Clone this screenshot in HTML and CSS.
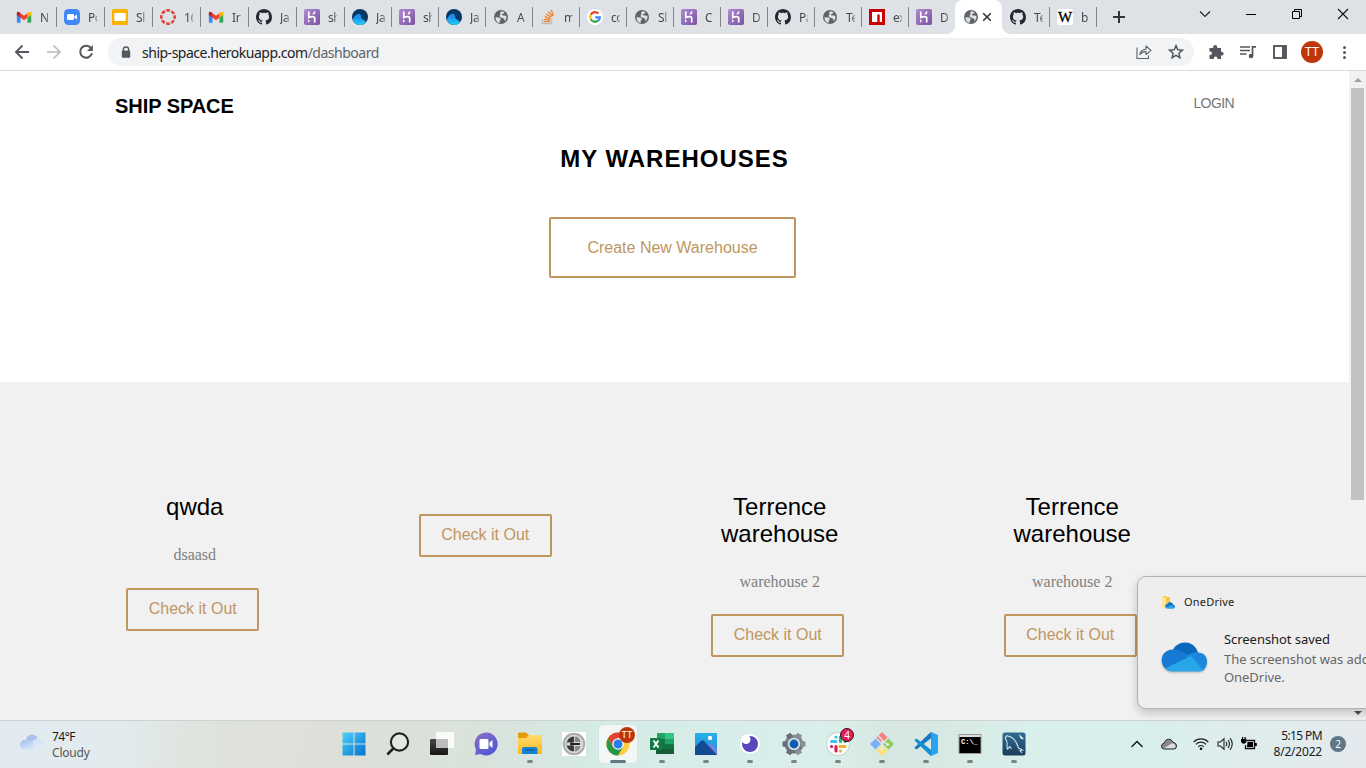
FILE: index.html
```html
<!DOCTYPE html>
<html lang="en">
<head>
<meta charset="utf-8">
<title>Ship Space</title>
<link rel="stylesheet" href="styles.css">
</head>
<body>
<svg class="defs" aria-hidden="true">
  <defs>
    <linearGradient id="gHer" x1="0" y1="0" x2="1" y2="1"><stop offset="0" stop-color="#ae8cd0"/><stop offset="1" stop-color="#7c51a1"/></linearGradient>
    <linearGradient id="gSurf" x1="0" y1="0" x2="0" y2="1"><stop offset="0.3" stop-color="#1e8ee8"/><stop offset="1" stop-color="#1cd4ff"/></linearGradient>
    <linearGradient id="gWin" x1="0" y1="0" x2="1" y2="1"><stop offset="0" stop-color="#52d0fb"/><stop offset="1" stop-color="#0072cf"/></linearGradient>
    <linearGradient id="gDark" x1="0" y1="0" x2="0" y2="1"><stop offset="0" stop-color="#484848"/><stop offset="1" stop-color="#161616"/></linearGradient>
    <linearGradient id="gMeet" x1="0" y1="0" x2="0.7" y2="1"><stop offset="0" stop-color="#8b6fc0"/><stop offset="1" stop-color="#5059d6"/></linearGradient>
    <linearGradient id="gFold" x1="0" y1="0" x2="0" y2="1"><stop offset="0" stop-color="#ffdc69"/><stop offset="1" stop-color="#fcb823"/></linearGradient>
    <linearGradient id="gPhoto" x1="0" y1="0" x2="0" y2="1"><stop offset="0" stop-color="#28b1ea"/><stop offset="1" stop-color="#2388d9"/></linearGradient>
    <linearGradient id="gCloud" x1="0" y1="0" x2="1" y2="1"><stop offset="0" stop-color="#a3bfec"/><stop offset="1" stop-color="#edf3fc"/></linearGradient>
    <linearGradient id="gSql" x1="0" y1="0" x2="0" y2="1"><stop offset="0" stop-color="#336c94"/><stop offset="1" stop-color="#183d5c"/></linearGradient>
    <linearGradient id="gGear" x1="0" y1="0" x2="0" y2="1"><stop offset="0" stop-color="#8b949c"/><stop offset="1" stop-color="#626b73"/></linearGradient>
    <symbol id="gmail" viewBox="0 0 16 16"><path d="M.8 4.200v8.600c0 .600.400 1 1 1h2.700V7.400z" fill="#4285f4"/><path d="M11.500 7.400v6.400h2.700c.6 0 1-.4 1-1V4.200z" fill="#34a853"/><path d="M4.300 4v4.500L8 11.300l3.700-2.800V4L8 6.800z" fill="#ea4335"/><path d="M.8 4v2l3.700 2.700V4C3 2.400.8 2.300.8 4z" fill="#c5221f"/><path d="M15.200 4v2l-3.700 2.700V4C13 2.400 15.200 2.300 15.200 4z" fill="#fbbc04"/></symbol>
    <symbol id="zoom" viewBox="0 0 16 16"><rect width="16" height="16" rx="4.500" fill="#4087fc"/><rect x="3" y="5" width="7" height="6" rx="1.300" fill="#fff"/><path d="M10.500 7.200 13 5.400v5.200l-2.500-1.800z" fill="#fff"/></symbol>
    <symbol id="slides" viewBox="0 0 16 16"><rect width="16" height="16" rx="1.500" fill="#f9b406"/><rect x="2.300" y="4" width="11.400" height="8" fill="#fff"/></symbol>
    <symbol id="canvas" viewBox="0 0 16 16"><circle cx="8" cy="8" r="6.700" fill="none" stroke="#e63e30" stroke-width="2.500" stroke-dasharray="3.800 1.462" stroke-dashoffset="1.900"/></symbol>
    <symbol id="github" viewBox="0 0 16 16"><path fill="#24292f" fill-rule="evenodd" d="M8 0C3.580 0 0 3.580 0 8c0 3.540 2.290 6.530 5.470 7.590.4.070.55-.17.55-.38 0-.19-.01-.82-.01-1.490-2.010.37-2.530-.49-2.690-.94-.09-.23-.48-.94-.82-1.130-.28-.15-.68-.52-.01-.53.63-.01 1.080.58 1.230.82.72 1.210 1.870.87 2.330.66.070-.52.28-.87.51-1.070-1.780-.2-3.640-.89-3.640-3.950 0-.87.31-1.590.82-2.150-.08-.2-.36-1.020.08-2.120 0 0 .67-.21 2.200.82.64-.18 1.320-.27 2-.27s1.360.09 2 .27c1.530-1.040 2.200-.82 2.200-.82.44 1.100.16 1.920.08 2.120.51.56.82 1.270.82 2.150 0 3.070-1.870 3.750-3.650 3.950.29.25.54.73.54 1.480 0 1.070-.01 1.930-.01 2.200 0 .21.15.46.55.38A8.010 8.010 0 0 0 16 8c0-4.420-3.580-8-8-8z"/></symbol>
    <symbol id="heroku" viewBox="0 0 16 16"><rect width="16" height="16" rx="1.800" fill="url(#gHer)"/><path d="M4.800 2.500v6c2.200-1 5.900-1.600 5.900.6v4.400" fill="none" stroke="#fff" stroke-width="1.700"/><path d="M4 10.300v3.400l2-1.700zM9.900 2.500h1.700c-.1 1.200-.7 2.200-1.500 3H8.400c.8-1 1.300-1.900 1.500-3z" fill="#fff"/></symbol>
    <symbol id="surf" viewBox="0 0 16 16"><circle cx="8" cy="8" r="8" fill="#073765"/><path d="M.6 10.800C2.200 7.500 3.700 5.300 5.800 4.900c2-.3 3.700.9 3.400 2.700-.2 1.600 1 2.400 2.600 3.400 1.200.8 1.700 1.600 2.200 2.300A8 8 0 0 1 .6 10.800z" fill="url(#gSurf)"/></symbol>
    <symbol id="globe" viewBox="0 0 16 16"><circle cx="8" cy="8" r="7" fill="#5f6368"/><path d="M2.500 8.200c2 .1 4 .1 5 1 .9.900-.3 1.700-.7 2.500-.3.800.2 1.500-.5 2.200C3.800 13.200 2.400 11 2.500 8.200zM8.200 2.200c1 .1 2.200.4 3.300 1.100l-.8 1.300-1.700.5.300 1.500 2.200-.2 1.900.7c.3 2.300-.5 4.100-2 5.300.2-1.300.2-2.300-.8-2.900-1-.5-1.500-.2-2.400-1-.8-.700-2-.7-1.700-1.800.3-.8 1.300-.6.900-1.700-.4-.900-.2-1.900.8-2.800z" fill="#dee1e6"/></symbol>
    <symbol id="stack" viewBox="0 0 16 16"><path d="M2.500 10v4.700h9.200V10" fill="none" stroke="#bcbbbb" stroke-width="1.300"/><path d="M4 12.600h6.200M4.100 10.300l6.100.7M4.700 7.700l5.900 1.900M6.100 5l5.200 3.300M8.400 2.700l4 4.700M11.300 1l2 5.800" stroke="#f48024" stroke-width="1.300"/></symbol>
    <symbol id="google" viewBox="0 0 16 16"><circle cx="8" cy="8" r="8" fill="#fff"/><g fill="none" stroke-width="2.300"><path d="M11.500 4.500A4.800 4.800 0 0 0 3.800 5.700" stroke="#ea4335"/><path d="M3.800 5.700a4.800 4.800 0 0 0 0 4.600" stroke="#fbbc05"/><path d="M3.800 10.300A4.800 4.800 0 0 0 11 11.700" stroke="#34a853"/><path d="M11 11.700c1.200-.9 1.800-2.100 1.800-3.300H8.200" stroke="#4285f4"/></g></symbol>
    <symbol id="npm" viewBox="0 0 16 16"><rect width="16" height="16" fill="#cb0000"/><path d="M3 3h10v10h-2.300V5.500H8.300V13H3z" fill="#fff"/></symbol>
    <symbol id="wiki" viewBox="0 0 16 16"><rect width="16" height="16" rx="2.500" fill="#fff"/><text x="8" y="13" text-anchor="middle" class="wiki-text">W</text></symbol>
    <symbol id="onedrive" viewBox="0 0 46 30"><path d="M11.500 9C16-2 33-3 37 11L24 16z" fill="#0869bd"/><path d="M12 7.500c5-.5 8 1 12 3.500l7 4L5 27C-2 22-1 8 12 7.500z" fill="#1679d4"/><path d="M24 15c5-5 21-8 22 4 0 5-2 8-5 10z" fill="#1b88de"/><path d="M4 26.500 30 14l12 14c-1 1-3 1.500-5 1.500H11c-3 0-5.500-1-7-3z" fill="#29a5ea"/></symbol>
  </defs>
</svg>

<div class="screen">
  <header class="tabstrip">
    <div class="tabs">
      <div class="tab wide"><svg><use href="#gmail"/></svg><span>N</span></div>
      <div class="tab wide"><svg><use href="#zoom"/></svg><span>Po</span></div>
      <div class="tab wide"><svg><use href="#slides"/></svg><span>Sl</span></div>
      <div class="tab wide"><svg><use href="#canvas"/></svg><span>16</span></div>
      <div class="tab wide"><svg><use href="#gmail"/></svg><span>In</span></div>
      <div class="tab wide"><svg><use href="#github"/></svg><span>Ja</span></div>
      <div class="tab wide"><svg><use href="#heroku"/></svg><span>sh</span></div>
      <div class="tab"><svg><use href="#surf"/></svg><span>Ja</span></div>
      <div class="tab"><svg><use href="#heroku"/></svg><span>sh</span></div>
      <div class="tab"><svg><use href="#surf"/></svg><span>Ja</span></div>
      <div class="tab"><svg><use href="#globe"/></svg><span>A</span></div>
      <div class="tab"><svg><use href="#stack"/></svg><span>m</span></div>
      <div class="tab"><svg><use href="#google"/></svg><span>co</span></div>
      <div class="tab"><svg><use href="#globe"/></svg><span>Sl</span></div>
      <div class="tab"><svg><use href="#heroku"/></svg><span>C</span></div>
      <div class="tab"><svg><use href="#heroku"/></svg><span>D</span></div>
      <div class="tab"><svg><use href="#github"/></svg><span>Pa</span></div>
      <div class="tab"><svg><use href="#globe"/></svg><span>Te</span></div>
      <div class="tab"><svg><use href="#npm"/></svg><span>ex</span></div>
      <div class="tab last"><svg><use href="#heroku"/></svg><span>D</span></div>
      <div class="tab active"><svg><use href="#globe"/></svg><svg class="tab-close" viewBox="0 0 10 10"><path d="m1.200 1.200 7.600 7.600m0-7.600L1.200 8.800" stroke="#33363a" stroke-width="1.600"/></svg></div>
      <div class="tab"><svg><use href="#github"/></svg><span>Te</span></div>
      <div class="tab"><svg><use href="#wiki"/></svg><span>b</span></div>
    </div>
    <svg class="plus" viewBox="0 0 12 12"><path d="M6 0v12M0 6h12" stroke="#2f3236" stroke-width="2"/></svg>
    <div class="window-controls">
      <svg viewBox="0 0 12 12"><path d="m1 3.500 5 5 5-5" fill="none" stroke="#222" stroke-width="1.100"/></svg>
      <svg viewBox="0 0 12 12"><path d="M1 6.500h10" stroke="#000"/></svg>
      <svg viewBox="0 0 12 12"><path d="M1.500 3.500h7v7h-7zM3.500 3.500v-2h7v7h-2" fill="none" stroke="#000"/></svg>
      <svg viewBox="0 0 12 12"><path d="m1 1 10 10M11 1 1 11" stroke="#111" stroke-width="1.100"/></svg>
    </div>
  </header>

  <div class="toolbar">
    <div class="nav-buttons">
      <svg viewBox="0 0 16 16"><path d="M15 8H2m6.500-6.500L2 8l6.500 6.500" fill="none" stroke="#54585d" stroke-width="1.900"/></svg>
      <svg viewBox="0 0 16 16"><path d="M1 8h13M7.500 1.500 14 8l-6.500 6.500" fill="none" stroke="#b9bbbd" stroke-width="1.700"/></svg>
      <svg viewBox="0 0 16 16"><path d="M13.300 4.500A6 6 0 1 0 14 9.300" fill="none" stroke="#54585d" stroke-width="2"/><path d="M14.900 1v6H9z" fill="#54585d"/></svg>
    </div>
    <div class="omnibox">
      <svg class="lock" viewBox="0 0 10 13"><path d="M2.300 5V3.700a2.700 2.700 0 0 1 5.400 0V5" fill="none" stroke="#54585d" stroke-width="1.400"/><rect x=".8" y="4.500" width="8.400" height="7.300" rx="1" fill="#54585d"/></svg>
      <span class="url">ship-space.herokuapp.com<span class="path">/dashboard</span></span>
      <svg class="share" viewBox="0 0 16 16"><path d="M1 3.500v11h11.500v-3" fill="none" stroke="#5f6368" stroke-width="1.100"/><path d="M10 5.200V2l5 4.300-5 4.200V7.600c-3 0-4.800.9-6.200 3C4.200 7.300 6.300 5.500 10 5.200z" fill="none" stroke="#5f6368" stroke-width="1.100" stroke-linejoin="round"/></svg>
      <svg class="star" viewBox="0 0 16 16"><path d="m8 1.600 1.800 4.200 4.500.4-3.400 3 1 4.500L8 11.300l-3.900 2.400 1-4.500-3.400-3 4.500-.4z" fill="none" stroke="#54585d" stroke-width="1.500"/></svg>
    </div>
    <div class="extensions">
      <svg viewBox="0 0 16 16"><path d="M1.500 4h3.700V3a2 2 0 0 1 4 0v1H13v3.800h.7a1.900 1.900 0 0 1 0 3.800H13V15H9.400v-.8a1.800 1.800 0 0 0-3.600 0v.8H1.500v-4h.7a1.800 1.800 0 0 0 0-3.600h-.7z" fill="#54585d"/></svg>
      <svg viewBox="0 0 16 16"><path d="M0 3h10M0 6.500h10M0 10h6.500" stroke="#54585d" stroke-width="1.700"/><path d="M12.500 12V2.800H16" fill="none" stroke="#54585d" stroke-width="1.700"/><circle cx="11" cy="12" r="2.300" fill="#54585d"/></svg>
      <svg viewBox="0 0 16 16"><rect x="2" y="2" width="12" height="12" fill="#fff" stroke="#54585d" stroke-width="1.900"/><path d="M10 2h4v12h-4z" fill="#54585d"/></svg>
    </div>
    <div class="avatar">TT</div>
    <div class="kebab"><i></i><i></i><i></i></div>
  </div>

  <div class="viewport">
    <main class="page">
      <nav class="site-nav"><a class="brand">SHIP SPACE</a><a class="login">LOGIN</a></nav>
      <section class="hero">
        <h1>MY WAREHOUSES</h1>
        <a class="btn btn-large">Create New Warehouse</a>
      </section>
      <section class="warehouses">
        <div class="cards">
          <article class="card"><h3>qwda</h3><p>dsaasd</p><a class="btn">Check it Out</a></article>
          <article class="card empty"><a class="btn">Check it Out</a></article>
          <article class="card"><h3>Terrence warehouse</h3><p>warehouse 2</p><a class="btn">Check it Out</a></article>
          <article class="card"><h3>Terrence warehouse</h3><p>warehouse 2</p><a class="btn">Check it Out</a></article>
        </div>
      </section>
    </main>
    <div class="scrollbar"><i class="up"></i><div class="thumb"></div><i class="down"></i></div>
  </div>

  <footer class="taskbar">
    <div class="weather">
      <svg viewBox="0 0 24 16"><circle cx="12" cy="6.500" r="6" fill="#a9c1eb"/><rect y="6" width="24" height="9.500" rx="4.750" fill="url(#gCloud)"/><circle cx="18" cy="9.500" r="5.500" fill="#dfe8f7" opacity=".7"/></svg>
      <div><b>74°F</b><span>Cloudy</span></div>
    </div>
    <div class="apps">
      <div class="app"><svg viewBox="0 0 24 24"><path d="M.5.500h11v11H.5zM12.500.500h11v11h-11zM.5 12.500h11v11H.5zM12.500 12.500h11v11h-11z" fill="url(#gWin)"/></svg></div>
      <div class="app"><svg viewBox="0 0 24 24"><circle cx="13.500" cy="10" r="8.600" fill="#e4e8e5" stroke="#222" stroke-width="2.100"/><path d="m7.300 16.500-6 6" stroke="#222" stroke-width="2.500"/></svg></div>
      <div class="app"><svg viewBox="0 0 24 24"><rect x="6" y="0" width="18" height="16" rx="1" fill="#fafafa"/><rect y="7" width="18" height="16" rx="1" fill="url(#gDark)"/><path d="M6 7h12v9H6z" fill="#bcbcbc"/></svg></div>
      <div class="app"><svg viewBox="0 0 24 24"><path d="M12 .5A11.500 11.500 0 1 1 6.500 22L1 23l1-5.500A11.500 11.500 0 0 1 12 .5z" fill="url(#gMeet)"/><rect x="5.500" y="7" width="9" height="10" rx="1.500" fill="#fff"/><path d="m15.500 10.500 3-2.500v8l-3-2.500z" fill="#fff"/></svg></div>
      <div class="app run"><svg viewBox="0 0 24 24"><path d="M0 2c0-.8.500-1.500 1.500-1.500H8L10.500 3H22v4H0z" fill="#e39a0b"/><path d="M0 6h8l3-3h12c.6 0 1 .4 1 1v17c0 .6-.4 1-1 1H1c-.6 0-1-.4-1-1z" fill="url(#gFold)"/><path d="M4 22v-5c0-1.200.8-2 2-2h11.500c1.200 0 2 .8 2 2v5z" fill="#1683d2"/><path d="M7 18h9.500" stroke="#0d5ea6" stroke-width="1.500"/></svg></div>
      <div class="app"><svg viewBox="0 0 24 24"><path d="M0 0h24v24H0z" fill="#fff"/><circle cx="12" cy="12" r="10.300" fill="#d8d8d8" stroke="#ababab" stroke-width="2"/><path d="M12 4.500a7.500 7.500 0 0 0 0 15z" fill="#3a3a3a"/><path d="M13 4.500c3 0 5 2 5.500 5.500H13zM13 14h5.500c-.5 3-2.500 5.500-5.500 5.500z" fill="#888"/><path d="M5 12h14" stroke="#e4e4e4" stroke-width="3"/><path d="m7.500 12 2.500-2.200V11h8v2h-8v1.200z" fill="#222"/></svg></div>
      <div class="app current run"><svg viewBox="0 0 24 24"><circle cx="12" cy="12" r="11.500" fill="#ffcd3f"/><path d="M2.040 6.250A11.500 11.500 0 0 1 21.960 6.250H12L7 15z" fill="#df4535"/><path d="M2.040 6.250A11.500 11.500 0 0 0 12 23.500l5-8.700H7z" fill="#269649"/><circle cx="12" cy="12" r="5.700" fill="#fff"/><circle cx="12" cy="12" r="4.500" fill="#287de8"/></svg><span class="badge chrome-badge">TT</span></div>
      <div class="app run"><svg viewBox="0 0 24 24"><path d="M7 1h8v6H7z" fill="#20a366"/><path d="M15 1h9v6h-9z" fill="#35c481"/><path d="M6 7h9v10H6z" fill="#10753f"/><path d="M15 7h9v5h-9z" fill="#20a366"/><path d="M15 12h9v5h-9z" fill="#10753f"/><path d="M6 17h18v5H6z" fill="#185c37"/><rect y="6" width="12" height="12" rx="1" fill="#107c41"/><path d="m3.500 8.500 5 7m0-7-5 7" stroke="#fff" stroke-width="1.900"/></svg></div>
      <div class="app run"><svg viewBox="0 0 24 24"><path d="M1 1h22v22H1z" fill="url(#gPhoto)"/><path d="m12 15 5-4 6 6v6H12z" fill="#6b83dc"/><path d="m1 15 6-6c1-1 2-1 3 0l13 14H1z" fill="#124b91"/><circle cx="16" cy="6" r="2.200" fill="#fff"/></svg></div>
      <div class="app run"><svg viewBox="0 0 24 24"><circle cx="12" cy="12" r="10" fill="#fff"/><circle cx="12" cy="12" r="8" fill="#5847b9"/><circle cx="8" cy="7.500" r="4.500" fill="#fff"/></svg></div>
      <div class="app run"><svg viewBox="0 0 24 24"><g fill="url(#gGear)"><circle cx="12" cy="12" r="9.500"/><path d="M9.500.500h5l.8 5H8.700zM9.500 23.500h5l.8-5H8.700z" transform="rotate(30 12 12)"/><path d="M9.500.500h5l.8 5H8.700zM9.500 23.500h5l.8-5H8.700z" transform="rotate(90 12 12)"/><path d="M9.500.500h5l.8 5H8.700zM9.500 23.500h5l.8-5H8.700z" transform="rotate(150 12 12)"/></g><circle cx="12" cy="12" r="6.200" fill="#d7dee2"/><circle cx="12" cy="12" r="4.400" fill="#0b5eb0"/></svg></div>
      <div class="app run"><svg viewBox="0 0 24 24"><circle cx="12" cy="12" r="11.500" fill="#fff" stroke="#c5cbc9"/><g stroke-width="3.200" stroke-linecap="round"><path d="M5.500 9.500h4.500M10 5v.1" stroke="#36c5f0"/><path d="M14.500 5v4.500M19 9.500h.1" stroke="#2eb67d"/><path d="M14 14.500h5M14.500 19v.1" stroke="#ecb22e"/><path d="M10 14.500V19M5.500 14.500h.1" stroke="#e01e5a"/></g></svg><span class="badge slack-badge">4</span></div>
      <div class="app run"><svg viewBox="0 0 24 24"><path d="m12 0 5.500 5.500L12 11 6.500 5.500z" fill="#fc7f7d"/><path d="m5.500 6.500 5.500 5.500-5.500 5.500L0 12z" fill="#7eb0f8"/><path d="m18.500 6.500L24 12l-5.500 5.500L13 12z" fill="#8cce58"/><path d="m12 13 5.500 5.500L12 24l-5.500-5.500z" fill="#ffdf78"/><path d="m8 3.500 4 4V16m0-8 5 4.500" fill="none" stroke="#dcefeb" stroke-width="1.200"/><circle cx="17.500" cy="12.500" r="1.500" fill="#dcefeb"/><circle cx="12" cy="17" r="1.500" fill="#dcefeb"/></svg></div>
      <div class="app run"><svg viewBox="0 0 24 24"><path d="m18 5.500-15.500 12L.3 15.800 16 .7 18 0z" fill="#1679bd"/><path d="M18 18.500 2.500 6.500.3 8.200 16 23.300l2 .7z" fill="#178dd3"/><path d="m17 0 6 2.500c.6.300 1 .7 1 1.500v16c0 .8-.4 1.200-1 1.500L17 24z" fill="#27a3ef"/></svg></div>
      <div class="app run"><svg viewBox="0 0 24 24"><path d="M.5 2h23v20H.5z" fill="#999"/><path d="M1.500 3h21v2h-21z" fill="#ddd"/><path d="M1.500 5h21v16h-21z"/><text x="3" y="12" class="cmd-text">C:\_</text></svg></div>
      <div class="app run"><svg viewBox="0 0 24 24"><rect x=".5" y=".5" width="23" height="23" rx="2.500" fill="url(#gSql)"/><path d="M5.500 17.500C4 14 6.500 11 4 7.500 3 6 3.500 3.500 6 4c6 1 9 7 10.500 12l4 2-2.500.5 2 2.500M5.500 17.500l2-3 2 2" fill="none" stroke="#d6e5ed" stroke-width="1.100"/><path d="m17 2 5 5-2 .2-2-1.700z" fill="#e9f4fa"/></svg></div>
    </div>
    <div class="tray">
      <svg viewBox="0 0 16 16"><path d="m2.500 11 5.500-5.500 5.500 5.500" fill="none" stroke="#111" stroke-width="1.300"/></svg>
      <svg viewBox="0 0 16 16"><path d="M3.500 13C-.5 13-.3 7.500 3.200 7.200 4.500 2 10.500 2 12 6.500c4.500.3 4.500 6.500 1 6.500z" fill="#898989" stroke="#222"/><path d="m3 12.300 8-5c3.500.2 4.500 4 2 5z" fill="#ddd"/></svg>
      <svg viewBox="0 0 16 16"><path d="M.7 6c4-4.200 10.600-4.200 14.600 0M2.900 8.400c3-3 7.200-3 10.200 0M5.200 10.800c1.700-1.600 3.900-1.600 5.600 0" fill="none" stroke="#222" stroke-width="1.100"/><circle cx="8" cy="12.700" r="1.300"/></svg>
      <svg viewBox="0 0 16 16"><path d="M1 6h2.500L7 2.700v10.600L3.500 10H1z" fill="none" stroke="#222" stroke-width="1.100"/><path d="M9 5.800q1.500 2.200 0 4.400M11 4q3 4 0 8M13 2.200q4.500 5.800 0 11.600" fill="none" stroke="#222" stroke-width="1.100"/></svg>
      <svg viewBox="0 0 16 16"><path d="M5.500 4.500h8v8h-9V9" fill="none" stroke="#111" stroke-width="1.300"/><path d="M6.500 6h5.500v5H6zM14 7h1.800v3H14zM0 3h5.500v2c0 3.500-5.500 3.500-5.500 0zM1 1h1.200v2H1zM3.500 1h1.200v2H3.500z"/></svg>
      <div class="clock"><span>5:15 PM</span><span>8/2/2022</span></div>
      <span class="count">2</span>
    </div>
  </footer>

  <aside class="toast">
    <div class="toast-app"><svg viewBox="0 0 14 14"><path d="M1 1h4l1 1h3v10H1z" fill="#f6c54b"/><path d="m1 1 4 2v11l-4-2z" fill="#ffe39a"/><use href="#onedrive" x="4" y="7" width="10" height="7"/></svg><span>OneDrive</span></div>
    <div class="toast-body"><svg><use href="#onedrive"/></svg><div><b>Screenshot saved</b><span>The screenshot was added to your</span><span>OneDrive.</span></div></div>
  </aside>
</div>
</body>
</html>
```

FILE: styles.css
```css
* { box-sizing: border-box; }
body { margin: 0; width: 1366px; height: 768px; overflow: hidden; font-family: "Noto Sans", sans-serif; }
svg { display: block; flex: none; }
.defs { position: absolute; width: 0; height: 0; }
.screen { position: relative; width: 1366px; height: 768px; overflow: hidden; display: flex; flex-direction: column; }

/* Browser tabs */
.tabstrip { height: 34px; flex: none; background: #dee1e6; display: flex; padding-left: 8px; }
.tabs { display: flex; }
.tab { position: relative; width: 47px; height: 34px; display: flex; align-items: center; padding-left: 8px; gap: 8px; font-size: 12px; color: #45484c; }
.tab.wide { width: 48px; }
.tab svg { width: 16px; height: 16px; }
.tab span { width: 9px; overflow: hidden; white-space: nowrap; letter-spacing: -0.4px; -webkit-mask-image: linear-gradient(90deg, #000 60%, #0006); mask-image: linear-gradient(90deg, #000 60%, #0006); }
.tab::after { content: ""; position: absolute; right: -1px; top: 7px; width: 1px; height: 20px; background: #82858a; }
.tab.last::after, .tab.active::after { display: none; }
.tab.active { background: #fff; border-radius: 8px 8px 0 0; gap: 3px; }
.tab.active::before { content: ""; position: absolute; left: -8px; right: -8px; bottom: 0; height: 8px; background: radial-gradient(circle at 0 0, transparent 7.500px, #fff 8px) left / 8px 8px no-repeat, radial-gradient(circle at 100% 0, transparent 7.500px, #fff 8px) right / 8px 8px no-repeat; }
.tab .tab-close { width: 10px; height: 10px; }
.wiki-text { font: 15px "Liberation Serif", serif; stroke: #000; stroke-width: .3px; }
.plus { width: 12px; height: 12px; margin: 11px 0 0 17px; }
.window-controls { margin-left: auto; display: flex; gap: 34px; padding: 8px 17px 0 0; }
.window-controls svg { width: 12px; height: 12px; }

/* Toolbar */
.toolbar { height: 37px; flex: none; background: #fff; border-bottom: 1px solid #d9dbde; display: flex; align-items: center; padding-left: 14px; }
.nav-buttons { display: flex; gap: 16px; width: 94px; }
.nav-buttons svg { width: 16px; height: 16px; }
.omnibox { width: 1086px; height: 28px; border-radius: 14px; background: #f1f3f4; display: flex; align-items: center; padding: 0 10px 0 13px; }
.lock { width: 10px; height: 13px; }
.url { margin-left: 11px; flex: 1; font-size: 14px; letter-spacing: -0.49px; color: #202124; }
.path { color: #5f6368; }
.share { width: 16px; height: 16px; margin-right: 16px; }
.star { width: 16px; height: 16px; }
.extensions { display: flex; gap: 16px; margin-left: 14px; }
.extensions svg { width: 16px; height: 16px; }
.avatar { width: 22px; height: 22px; margin-left: 13px; border-radius: 50%; background: #bf360c; color: #fff; font: 12px/22px Roboto, sans-serif; text-align: center; }
.kebab { display: flex; flex-direction: column; gap: 2px; margin-left: 20px; }
.kebab i { width: 3px; height: 3px; border-radius: 50%; background: #54585d; }

/* Site */
.viewport { height: 649px; flex: none; display: flex; }
.page { width: 1349px; background: #fff; display: flex; flex-direction: column; font-family: "Liberation Sans", sans-serif; }
.site-nav { display: flex; justify-content: space-between; align-items: center; padding: 20px 115px 0; height: 50px; flex: none; }
.brand { font-size: 20px; font-weight: bold; color: #000; letter-spacing: -0.05px; line-height: 30px; }
.login { font-size: 14px; color: #777; margin-top: -6px; letter-spacing: -0.6px; }
.hero { height: 261px; flex: none; display: flex; flex-direction: column; align-items: center; padding-top: 22px; }
.hero h1 { margin: 0 0 43px; font-size: 24px; line-height: 31px; letter-spacing: 1px; color: #000; }
.btn { display: block; width: 133px; height: 43px; margin-right: 4px; border: 2px solid #c09660; border-radius: 2px; color: #c09660; font-size: 16px; line-height: 37px; text-align: center; }
.btn-large { width: 247px; height: 61px; line-height: 57px; }
.warehouses { flex: 1; background: #f1f1f1; padding: 112px 0 0 48.500px; }
.cards { display: grid; grid-template-columns: repeat(4, 292.500px); }
.card { display: flex; flex-direction: column; align-items: center; text-align: center; }
.card.empty { padding-top: 20px; }
.card h3 { width: 150px; margin: 0 0 22.500px; font-size: 24px; font-weight: normal; line-height: 26.500px; color: #000; }
.card p { margin: 0 0 21px; font: 16px/24px "Liberation Serif", serif; color: #808080; }
.card:nth-child(n+3) p { margin-bottom: 20px; }
.scrollbar { width: 17px; background: #f1f1f1; display: flex; flex-direction: column; align-items: center; padding: 7px 0 5px; }
.scrollbar i { width: 0; height: 0; border: 4px solid transparent; }
.scrollbar .up { border-top: 0; border-bottom-color: #a0a0a0; }
.scrollbar .down { border-bottom: 0; border-top-color: #505050; margin-top: auto; }
.thumb { width: 13px; height: 412px; margin-top: 6px; background: #c1c1c1; }

/* Taskbar */
.taskbar { height: 48px; flex: none; position: relative; display: flex; border-top: 1px solid #cdd3d1; background: linear-gradient(97deg, #e1ebef 0, #e2ecef 8%, #dfe4df 14%, #dfe0d9 20%, #dce0d9 27%, #d8e3dc 36%, #d5ebe6 44%, #daefeb 60%, #d6e6e2 66%, #d9efeb 75%, #d9efeb 84%, #e2ebed 96%, #e5e9ed 100%); }
.weather { width: 332px; display: flex; padding: 8px 0 0 20px; gap: 8px; }
.weather svg { width: 24px; height: 16px; margin-top: 5px; }
.weather b, .weather span { display: block; font-size: 12px; line-height: 16px; font-weight: normal; color: #191919; letter-spacing: -0.5px; }
.weather span { color: #555; letter-spacing: -0.2px; }
.apps { display: flex; padding-top: 3px; }
.app { width: 44px; height: 40px; position: relative; display: flex; align-items: center; justify-content: center; }
.app svg { width: 24px; height: 24px; position: relative; }
.app.current::before { content: ""; position: absolute; left: 3px; top: 1px; width: 38px; height: 38px; border-radius: 4px; background: #f2f7f6; box-shadow: 0 0 1px #abc; }
.app.run::after { content: ""; position: absolute; left: 19px; bottom: 1px; width: 6px; height: 3px; border-radius: 2px; background: #7a8482; }
.app.current::after { left: 14px; width: 16px; background: #627985; }
.badge { position: absolute; border-radius: 50%; color: #fff; text-align: center; }
.chrome-badge { left: 23px; top: 3px; width: 16px; height: 16px; background: #bf360c; font: 9px/16px Roboto, sans-serif; }
.slack-badge { left: 24px; top: 4px; width: 14px; height: 14px; background: #e01e5a; border: 1px solid #35101d; font: 10px/12px "Noto Sans", sans-serif; }
.cmd-text { font: bold 7px "Liberation Mono", monospace; fill: #fff; }
.tray { margin-left: auto; padding-right: 20px; display: flex; align-items: center; gap: 8px; }
.tray svg { width: 16px; height: 16px; margin-top: -1px; }
.tray svg:nth-child(-n+2) { margin-right: 8px; }
.clock { width: 57px; margin-top: -2px; display: flex; flex-direction: column; align-items: flex-end; font-size: 12px; line-height: 16px; letter-spacing: -0.38px; color: #202020; white-space: nowrap; }
.clock span:first-child { letter-spacing: -0.6px; }
.clock span:last-child { letter-spacing: -0.2px; }
.count { width: 16px; height: 16px; margin-top: -2px; border-radius: 50%; background: #607786; color: #fff; font-size: 10px; line-height: 16px; text-align: center; }

/* Notification */
.toast { position: absolute; left: 1137px; top: 576px; width: 260px; height: 133px; border: 1px solid #b2b2b2; border-radius: 9px; background: #eee; box-shadow: 0 4px 10px #0003; padding: 17px 0 0 23px; }
.toast-app { display: flex; align-items: center; gap: 9px; font-size: 11px; line-height: 16px; letter-spacing: .2px; color: #222; }
.toast-app svg { width: 14px; height: 14px; }
.toast-body { display: flex; gap: 17px; margin-top: 19px; white-space: nowrap; }
.toast-body svg { width: 46px; height: 30px; margin-top: 13px; filter: drop-shadow(0 1px 1px #0004); }
.toast-body b, .toast-body span { display: block; font-size: 13px; line-height: 18px; font-weight: normal; color: #666; letter-spacing: -0.05px; }
.toast-body b { color: #202020; line-height: 20px; margin-bottom: 1px; }
```
